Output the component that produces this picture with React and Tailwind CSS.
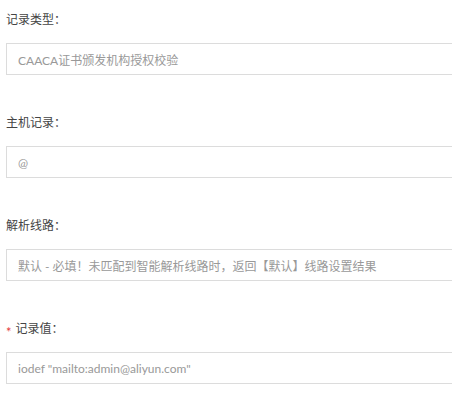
const fields = [
  { label: '记录类型：', value: 'CAACA证书颁发机构授权校验' },
  { label: '主机记录：', value: '@' },
  { label: '解析线路：', value: '默认 - 必填！未匹配到智能解析线路时，返回【默认】线路设置结果' },
  { label: '记录值：', value: 'iodef "mailto:admin@aliyun.com"', required: true },
]

export default function App() {
  return (
    <div className="w-[452px] h-[407px] overflow-hidden bg-white pl-[6px] pt-[10px] text-[12px] font-['Lato','Noto_Sans_CJK_SC',sans-serif]">
      {fields.map(f => (
        <div key={f.label} className="mb-[38px]">
          <div className="flex items-center h-[20px] leading-[20px] mb-[13px] text-[#444]">
            {f.required && <span className="text-[#e4393c] mr-[4px] text-[13px] translate-y-[3px]">*</span>}
            <span>{f.label}</span>
          </div>
          <input
            type="text"
            readOnly
            value={f.value}
            className="block w-[480px] h-[32px] border border-[#dcdcdc] bg-white px-[11px] text-[#999] outline-none"
          />
        </div>
      ))}
    </div>
  )
}
